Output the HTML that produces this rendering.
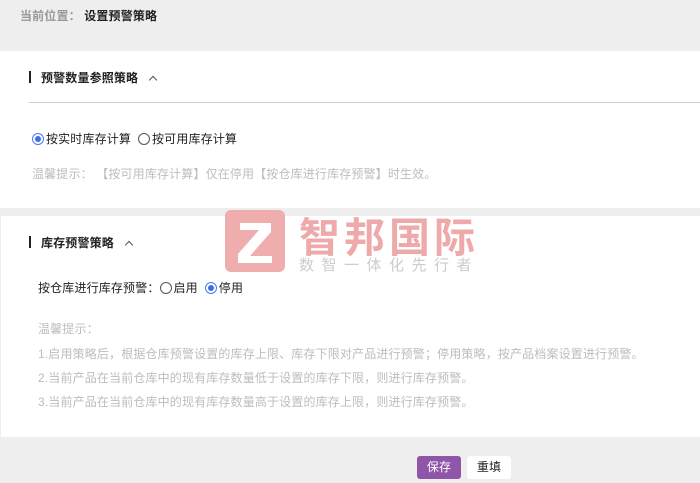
<!DOCTYPE html>
<html><head><meta charset="utf-8"><style>
*{margin:0;padding:0;box-sizing:border-box}
body{width:700px;height:483px;background:#eeeeee;font-family:"Liberation Sans","Noto Sans CJK SC",sans-serif;font-size:12px;color:#222;position:relative;overflow:hidden;letter-spacing:0.15px}
.a{position:absolute;white-space:nowrap}
.p{position:absolute;background:#fff;left:0;width:700px}
.bar{position:absolute;width:2px;height:12px;background:#222}
.r{display:inline-block;width:12px;height:12px;border:1px solid #555;border-radius:50%;vertical-align:-2px;margin-right:2px;position:relative;background:#fff}
.r.on{border-color:#4a7af0}
.r.on:after{content:"";position:absolute;left:2px;top:2px;width:6px;height:6px;border-radius:50%;background:#3b6cf0}
.g{color:#bdbdbd}
.car{display:inline-block;width:6px;height:6px;border-left:1.3px solid #555;border-top:1.3px solid #555;transform:rotate(45deg);margin-left:12px;vertical-align:-1px}
</style></head><body>
<div class="a" style="left:20px;top:7px;font-weight:bold;color:#999">当前位置： <span style="color:#222">设置预警策略</span></div>
<div class="p" style="top:51px;height:157px"></div>
<div class="p" style="top:216px;height:221px;left:1px"></div>
<div class="bar" style="left:29px;top:71px"></div>
<div class="a" style="left:41px;top:69px;font-weight:bold">预警数量参照策略<span class="car"></span></div>
<div style="position:absolute;left:29px;top:102px;width:671px;height:1px;background:#ccc"></div>
<div class="a" style="left:32px;top:130px"><span class="r on"></span>按实时库存计算 &nbsp;<span class="r"></span>按可用库存计算</div>
<div class="a g" style="left:32px;top:165px">温馨提示： 【按可用库存计算】仅在停用【按仓库进行库存预警】时生效。</div>
<div class="bar" style="left:29px;top:236px"></div>
<div class="a" style="left:41px;top:234px;font-weight:bold">库存预警策略<span class="car"></span></div>
<div class="a" style="left:38px;top:279px">按仓库进行库存预警：<span class="r"></span>启用 &nbsp;<span class="r on"></span>停用</div>
<div class="a g" style="left:38px;top:320px">温馨提示：</div>
<div class="a g" style="left:38px;top:345px">1.启用策略后，根据仓库预警设置的库存上限、库存下限对产品进行预警；停用策略，按产品档案设置进行预警。</div>
<div class="a g" style="left:38px;top:369px">2.当前产品在当前仓库中的现有库存数量低于设置的库存下限，则进行库存预警。</div>
<div class="a g" style="left:38px;top:393px">3.当前产品在当前仓库中的现有库存数量高于设置的库存上限，则进行库存预警。</div>
<div style="position:absolute;left:225px;top:210px;width:60px;height:62px;background:#eea9aa;border-radius:6px;opacity:.95"></div>
<svg style="position:absolute;left:225px;top:210px" width="60" height="62"><path d="M15 13H46V22L25 46H47V53H13V44L34 20H15Z" fill="#fff"/></svg>
<div class="a" style="left:299px;top:204px;font-size:41px;font-weight:bold;color:#eea9aa;letter-spacing:4px">智邦国际</div>
<div class="a" style="left:299px;top:254px;font-size:15px;color:#ccc;letter-spacing:7.5px">数智一体化先行者</div>
<div class="a" style="left:417px;top:456px;width:44px;height:23px;background:#8e55a8;border-radius:3px;color:#fff;text-align:center;line-height:23px">保存</div>
<div class="a" style="left:467px;top:456px;width:44px;height:23px;background:#fff;border-radius:3px;color:#222;text-align:center;line-height:23px">重填</div>
</body></html>
